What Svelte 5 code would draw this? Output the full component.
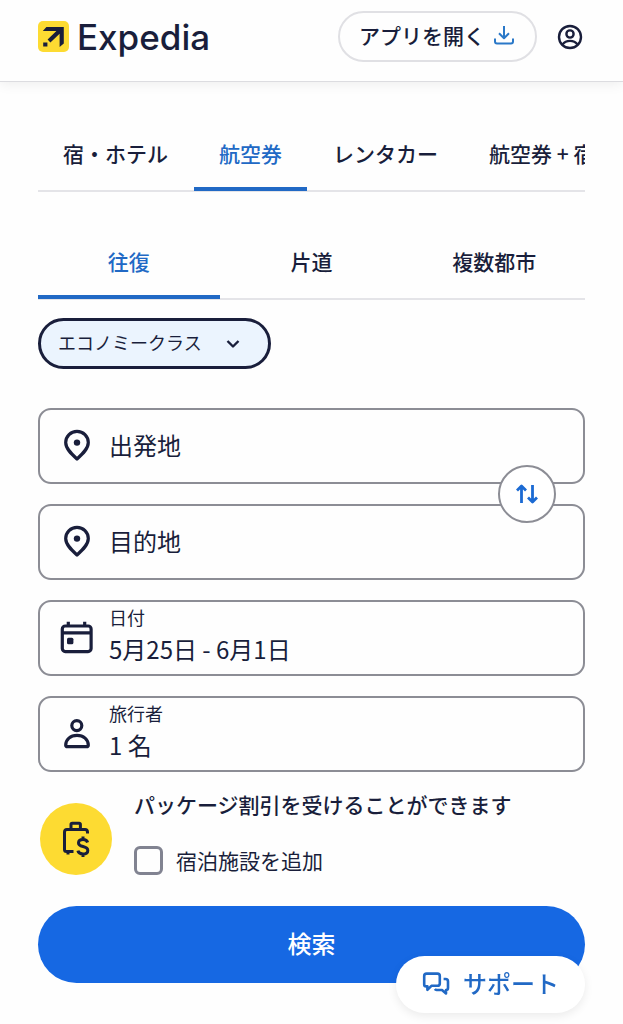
<script lang="ts">
	const products = ['宿・ホテル', '航空券', 'レンタカー', '航空券 + 宿泊'];
	const tripTypes = ['往復', '片道', '複数都市'];
	const cabins = ['エコノミークラス', 'プレミアムエコノミー', 'ビジネスクラス', 'ファーストクラス'];

	let product = $state('航空券');
	let tripType = $state('往復');
	let cabin = $state('エコノミークラス');
	let origin = $state('');
	let destination = $state('');
	let addStay = $state(false);

	function swapPlaces() {
		[origin, destination] = [destination, origin];
	}
</script>

{#snippet pin()}
	<svg class="icon" viewBox="0 0 38 38" aria-hidden="true">
		<path d="M19 32C13 26.6 7.7 21.6 7.7 15.6a11.3 11.3 0 0 1 22.6 0C30.3 21.6 25 26.6 19 32Z" />
		<circle class="solid" cx="19" cy="15.6" r="3.2" />
	</svg>
{/snippet}

<header>
	<a class="logo" href="/">
		<svg viewBox="0 0 31 31" aria-hidden="true">
			<rect width="31" height="31" rx="5" fill="#fddb32" />
			<path
				d="M8.4 6H25.8V22.6L21.6 26V12.8L12.4 21.4 9.6 18.6 18.4 9.9H4.8ZM5.2 21.400H9.400V25.600H5.200Z"
				fill="#191e3b"
			/>
		</svg>
		<span>Expedia</span>
	</a>
	<a class="open-app" href="/app">
		アプリを開く
		<svg viewBox="0 0 22 22" aria-hidden="true">
			<path d="M11 2V14M6 9.2l5 5 5-5M2 14.5V17.5a2 2 0 0 0 2 2H18a2 2 0 0 0 2-2V14.5" />
		</svg>
	</a>
	<button class="account" aria-label="アカウント">
		<svg viewBox="0 0 30 30" aria-hidden="true">
			<circle cx="15" cy="15" r="11" />
			<circle cx="15" cy="12" r="3.6" />
			<path d="M7.6 22.4C9.5 19.8 12 18.9 15 18.9S20.5 19.8 22.4 22.4" />
		</svg>
	</button>
</header>

<main>
	<div class="tabs" role="tablist">
		{#each products as name}
			<button
				role="tab"
				aria-selected={product === name}
				class:active={product === name}
				onclick={() => (product = name)}>{name}</button
			>
		{/each}
	</div>

	<div class="tabs even" role="tablist">
		{#each tripTypes as name}
			<button
				role="tab"
				aria-selected={tripType === name}
				class:active={tripType === name}
				onclick={() => (tripType = name)}>{name}</button
			>
		{/each}
	</div>

	<div class="cabin">
		<select bind:value={cabin} aria-label="座席クラス">
			{#each cabins as name}
				<option>{name}</option>
			{/each}
		</select>
		<svg viewBox="0 0 16 16" aria-hidden="true">
			<path d="M2.5 5l5.5 5.5L13.5 5" />
		</svg>
	</div>

	<form onsubmit={(e) => e.preventDefault()}>
		<div class="places">
			<label class="field">
				{@render pin()}
				<input type="text" placeholder="出発地" aria-label="出発地" bind:value={origin} />
			</label>
			<label class="field">
				{@render pin()}
				<input type="text" placeholder="目的地" aria-label="目的地" bind:value={destination} />
			</label>
			<button type="button" class="swap" aria-label="出発地と目的地を入れ替える" onclick={swapPlaces}>
				<svg viewBox="0 0 26 26" aria-hidden="true">
					<path d="M7.5 22V5M3 9.5l4.5-4.5L12 9.500M18.5 4V21M14 16.5l4.5 4.5L23 16.500" />
				</svg>
			</button>
		</div>

		<button type="button" class="field">
			<svg class="icon" viewBox="0 0 38 38" aria-hidden="true">
				<rect x="4.3" y="7" width="28.8" height="25.6" rx="3" />
				<path d="M10.3 2.8V7M26.7 2.8V7M4.3 13.8H33" />
				<rect class="solid" x="9" y="18.8" width="6.4" height="6.4" rx="1.5" />
			</svg>
			<span class="value">
				<small>日付</small>
				5月25日 - 6月1日
			</span>
		</button>

		<button type="button" class="field">
			<svg class="icon" viewBox="0 0 38 38" aria-hidden="true">
				<circle cx="18.8" cy="10.6" r="5" />
				<path d="M7.7 30.2C7.7 24.5 12.5 20.4 19 20.4S30.3 24.5 30.3 30.2A1.5 1.5 0 0 1 28.8 31.7H9.2A1.5 1.5 0 0 1 7.7 30.2Z" />
			</svg>
			<span class="value">
				<small>旅行者</small>
				1 名
			</span>
		</button>

		<div class="package">
			<span class="badge">
				<svg viewBox="0 0 38 38" aria-hidden="true">
					<path d="M14 9.5V4.5A1.2 1.2 0 0 1 15.2 3.3H22.2A1.2 1.2 0 0 1 23.4 4.5V9.5" />
					<path d="M30.5 13.5V12A2.5 2.5 0 0 0 28 9.6H10A2.5 2.5 0 0 0 7.5 12V29.5A2 2 0 0 0 9.5 31.5H16.5M11 31.5V34.5" />
					<path d="M30.6 22.5C30 20.3 28.2 19.5 26 19.5 23.3 19.5 21.5 20.8 21.5 22.9 21.5 25.1 23.4 25.8 26 26.5 28.8 27.2 30.8 28 30.8 30.4 30.8 32.7 28.7 34 26 34 23.3 34 21.4 32.9 20.9 30.7M26 16.5V19.5M26 34V37" />
				</svg>
			</span>
			<div class="offer">
				<p>パッケージ割引を受けることができます</p>
				<label>
					<input type="checkbox" bind:checked={addStay} />
					宿泊施設を追加
				</label>
			</div>
		</div>

		<button type="submit" class="search">検索</button>
	</form>
</main>

<button class="support">
	<svg viewBox="0 0 32 32" aria-hidden="true">
		<path d="M7.4 22.8V19.4H6.2A2 2 0 0 1 4.2 17.4V9A2.4 2.4 0 0 1 6.6 6.6H17.4A2.4 2.4 0 0 1 19.8 9V16.4A2.4 2.4 0 0 1 17.4 18.800H11.4Z" />
		<path d="M23.6 12H25.6A2.4 2.4 0 0 1 28 14.4V21A2 2 0 0 1 26 23V26.4L22 23H16.6A2.4 2.4 0 0 1 14.800 22" />
	</svg>
	サポート
</button>

<style>
	:global(body) {
		--ink: #191e3b;
		--link: #2169c5;
		--line: #e4e4e8;
		--outline: #8c8d95;
		background: #fefefe;
		color: var(--ink);
		font-family: 'Noto Sans CJK JP', sans-serif;
		font-size: 21px;
		line-height: 30px;
	}

	a,
	button,
	input,
	select {
		box-sizing: border-box;
		color: inherit;
		font: inherit;
		text-decoration: none;
	}

	button {
		background: none;
		border: none;
		padding: 0;
		cursor: pointer;
	}

	svg {
		display: block;
		flex-shrink: 0;
		fill: none;
		stroke: currentColor;
		stroke-linejoin: round;
	}

	header {
		display: flex;
		align-items: center;
		padding: 11px 38px 19px;
		border-bottom: 1px solid #dcdce0;
		box-shadow: 0 2px 12px rgba(0, 0, 0, 0.07);
	}

	.logo {
		display: flex;
		align-items: center;
		gap: 8px;
		margin-right: auto;
		font-family: Inter, sans-serif;
		font-size: 35px;
		font-weight: 500;
	}

	.logo svg {
		width: 31px;
		height: 31px;
		stroke: none;
	}

	.open-app {
		display: flex;
		align-items: center;
		gap: 8px;
		height: 51px;
		padding: 0 20px 3px 19px;
		border: 2px solid #e0e0e4;
		border-radius: 26px;
		font-weight: 500;
	}

	.open-app svg {
		width: 22px;
		height: 22px;
		color: #2a78c8;
		stroke-width: 2;
	}

	.account {
		margin-left: 18px;
	}

	.account svg {
		width: 30px;
		height: 30px;
		stroke-width: 2.4;
	}

	main {
		padding: 39px 38px;
	}

	.tabs {
		display: flex;
		gap: 1px;
		overflow: hidden;
		margin-bottom: 37px;
		padding-bottom: 1px;
		box-shadow: inset 0 -2px var(--line);
	}

	.tabs button {
		flex-shrink: 0;
		height: 70px;
		padding: 0 25px 3px;
		border-bottom: 4px solid transparent;
		font-weight: 500;
		white-space: nowrap;
	}

	.tabs .active {
		border-color: var(--link);
		color: var(--link);
	}

	.even {
		margin-bottom: 18px;
	}

	.even button {
		flex: 1;
	}

	.cabin {
		display: inline-grid;
		align-items: center;
		margin-bottom: 39px;
		vertical-align: top;
	}

	.cabin select,
	.cabin svg {
		grid-area: 1 / 1;
	}

	.cabin select {
		appearance: none;
		width: 233px;
		height: 51px;
		padding: 0 60px 3px 17px;
		background: #ebf4fe;
		border: 3px solid var(--ink);
		border-radius: 26px;
		font-size: 18px;
	}

	.cabin svg {
		justify-self: end;
		width: 16px;
		height: 16px;
		margin-right: 30px;
		stroke-width: 2.4;
		pointer-events: none;
	}

	form,
	.places {
		display: grid;
		gap: 20px;
	}

	.places {
		position: relative;
	}

	.field {
		display: flex;
		align-items: center;
		gap: 13px;
		box-sizing: border-box;
		height: 76px;
		padding: 0 18px;
		border: 2px solid var(--outline);
		border-radius: 13px;
		font-size: 24px;
		text-align: left;
	}

	.icon {
		width: 38px;
		height: 38px;
		stroke-width: 3.2;
	}

	.solid {
		fill: currentColor;
		stroke: none;
	}

	.field input {
		flex: 1;
		min-width: 0;
		padding: 0 0 3px;
		background: none;
		border: none;
		outline: none;
	}

	.field input::placeholder {
		color: inherit;
		opacity: 1;
	}

	.value {
		padding-bottom: 10px;
	}

	.value small {
		display: block;
		margin-bottom: 2px;
		font-size: 18px;
	}

	.swap {
		position: absolute;
		top: calc(50% - 29px);
		right: 29px;
		display: grid;
		place-items: center;
		width: 58px;
		height: 58px;
		background: #fff;
		border: 2px solid var(--outline);
		border-radius: 50%;
		color: #1b6ad3;
	}

	.swap svg {
		width: 26px;
		height: 26px;
		stroke-width: 2.8;
	}

	.package {
		display: flex;
		align-items: flex-end;
		gap: 22px;
		padding-left: 2px;
	}

	.badge {
		display: grid;
		place-items: center;
		width: 72px;
		height: 72px;
		background: #fddb32;
		border-radius: 50%;
	}

	.badge svg {
		width: 38px;
		height: 38px;
		stroke-width: 3;
	}

	.offer p {
		margin: 0 0 29px;
		font-weight: 500;
		line-height: 24px;
	}

	.offer label {
		display: flex;
		align-items: center;
		gap: 13px;
	}

	.offer input {
		appearance: none;
		width: 29px;
		height: 29px;
		margin: 0;
		border: 3px solid #818391;
		border-radius: 6px;
	}

	.offer input:checked {
		background: var(--link);
	}

	.search {
		height: 77px;
		margin-top: 11px;
		padding-bottom: 3px;
		background: #1668e3;
		border-radius: 39px;
		color: #fff;
		font-size: 24px;
		font-weight: 500;
	}

	.support {
		position: fixed;
		right: 38px;
		bottom: 11px;
		display: flex;
		align-items: center;
		gap: 11px;
		height: 57px;
		padding: 0 26px 3px 24px;
		background: #fff;
		border-radius: 29px;
		box-shadow: 0 3px 10px rgba(0, 0, 0, 0.08);
		color: var(--link);
		font-size: 24px;
		font-weight: 500;
	}

	.support svg {
		width: 32px;
		height: 32px;
		stroke-width: 2.6;
	}
</style>
